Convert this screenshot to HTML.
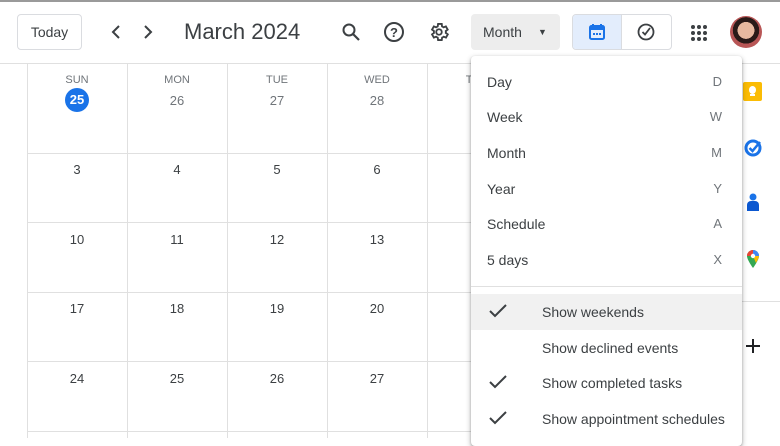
<!DOCTYPE html>
<html><head><style>
*{margin:0;padding:0;box-sizing:border-box}
body{width:780px;height:438px;overflow:hidden;background:#fff;font-family:"Liberation Sans",Arial,sans-serif;color:#3c4043;position:relative}
.topline{position:absolute;left:0;top:0;width:780px;height:2px;background:#9a9a9a}
.hdr{position:absolute;left:0;top:2px;width:780px;height:62px;border-bottom:1px solid #e0e0e0}
.btn{position:absolute;border:1px solid #dadce0;border-radius:4px}
.col{position:absolute;top:64px;width:1px;height:374px;background:#e0e0e0}
.row{position:absolute;left:27px;width:710px;height:1px;background:#e0e0e0}
.dn{position:absolute;width:100px;text-align:center;font-size:13px;color:#3c4043}
.dh{position:absolute;width:100px;text-align:center;font-size:11px;color:#70757a;top:74px}
.menu{position:absolute;left:471px;top:56px;width:271px;height:390px;background:#fff;border-radius:4px;box-shadow:0 2px 6px rgba(0,0,0,.3),0 1px 2px rgba(0,0,0,.2)}
.mi{position:absolute;left:16px;right:20px;font-size:14px;color:#3c4043}
.mi span{position:absolute;right:0;top:0;color:#70757a;font-size:13px}
.ck{position:absolute;left:71px;font-size:14px;color:#3c4043}
</style></head><body>
<div class="topline"></div>
<div class="hdr"></div>
<div class="btn" style="left:17px;top:14px;width:65px;height:36px;font-size:14px;line-height:34px;text-align:center;color:#3c4043">Today</div>
<svg style="position:absolute;left:108px;top:24px" width="16" height="16"><path d="M11 2 L5 8 L11 14" fill="none" stroke="#3c4043" stroke-width="2"/></svg>
<svg style="position:absolute;left:140px;top:24px" width="16" height="16"><path d="M5 2 L11 8 L5 14" fill="none" stroke="#3c4043" stroke-width="2"/></svg>
<div style="position:absolute;left:184px;top:19px;font-size:22px;color:#3c4043">March 2024</div>
<svg style="position:absolute;left:341px;top:22px" width="20" height="20"><circle cx="8" cy="8" r="5.5" fill="none" stroke="#3c4043" stroke-width="2"/><path d="M12 12 L18 18" stroke="#3c4043" stroke-width="2.2"/></svg>
<svg style="position:absolute;left:383px;top:21px" width="22" height="22"><circle cx="11" cy="11" r="9" fill="none" stroke="#3c4043" stroke-width="2"/><text x="11" y="16" font-size="13" text-anchor="middle" fill="#3c4043" font-family="Liberation Sans" font-weight="bold">?</text></svg>
<svg style="position:absolute;left:428px;top:21px" width="22" height="22" viewBox="0 0 24 24"><path d="M19.4 13a7.5 7.5 0 000-2l2.1-1.6-2-3.5-2.5 1a7.3 7.3 0 00-1.7-1L15 3.2h-4l-.4 2.7a7.3 7.3 0 00-1.7 1l-2.5-1-2 3.5L6.5 11a7.5 7.5 0 000 2l-2.1 1.6 2 3.5 2.5-1a7.3 7.3 0 001.7 1l.4 2.7h4l.4-2.7a7.3 7.3 0 001.7-1l2.5 1 2-3.5z" fill="none" stroke="#3c4043" stroke-width="2"/><circle cx="12" cy="12" r="3" fill="none" stroke="#3c4043" stroke-width="2"/></svg>
<div style="position:absolute;left:471px;top:14px;width:89px;height:36px;background:#ededed;border-radius:4px;font-size:14px;line-height:36px;padding-left:12px">Month<span style="position:absolute;left:67px;top:0;font-size:9px">▼</span></div>
<div class="btn" style="left:572px;top:14px;width:100px;height:36px"></div>
<div style="position:absolute;left:573px;top:15px;width:49px;height:34px;background:#e3edfc;border-right:1px solid #dadce0;border-radius:3px 0 0 3px"></div>
<svg style="position:absolute;left:588px;top:23px" width="18" height="18"><rect x="2" y="3" width="14" height="13" rx="1.5" fill="none" stroke="#1a73e8" stroke-width="2"/><rect x="2" y="3" width="14" height="4" fill="#1a73e8"/><path d="M5 1v3M13 1v3" stroke="#1a73e8" stroke-width="2"/><rect x="5" y="10" width="2" height="2" fill="#1a73e8"/><rect x="8" y="10" width="2" height="2" fill="#1a73e8"/><rect x="11" y="10" width="2" height="2" fill="#1a73e8"/></svg>
<svg style="position:absolute;left:637px;top:23px" width="18" height="18"><circle cx="9" cy="9" r="7.5" fill="none" stroke="#3c4043" stroke-width="1.8"/><path d="M5.5 9 L8 11.5 L13 5" fill="none" stroke="#3c4043" stroke-width="1.8"/></svg>
<svg style="position:absolute;left:690px;top:24px" width="18" height="18" fill="#3c4043"><circle cx="3" cy="3" r="2"/><circle cx="9" cy="3" r="2"/><circle cx="15" cy="3" r="2"/><circle cx="3" cy="9" r="2"/><circle cx="9" cy="9" r="2"/><circle cx="15" cy="9" r="2"/><circle cx="3" cy="15" r="2"/><circle cx="9" cy="15" r="2"/><circle cx="15" cy="15" r="2"/></svg>
<div style="position:absolute;left:730px;top:16px;width:32px;height:32px;border-radius:50%;background:radial-gradient(circle at 50% 45%,#e8b9a0 0 35%,#2a1a18 36% 55%,#b85656 56%)"></div>

<div class="col" style="left:27px"></div><div class="col" style="left:127px"></div><div class="col" style="left:227px"></div><div class="col" style="left:327px"></div><div class="col" style="left:427px"></div>
<div class="row" style="top:153px"></div><div class="row" style="top:222px"></div><div class="row" style="top:292px"></div><div class="row" style="top:361px"></div><div class="row" style="top:431px"></div>

<div class="dh" style="left:27px">SUN</div><div class="dh" style="left:127px">MON</div><div class="dh" style="left:227px">TUE</div><div class="dh" style="left:327px">WED</div><div class="dh" style="left:427px">THU</div>
<div style="position:absolute;left:65px;top:88px;width:24px;height:24px;border-radius:50%;background:#1a73e8;color:#fff;font-size:13px;font-weight:bold;text-align:center;line-height:24px">25</div>
<div class="dn" style="left:127px;top:93px;color:#70757a">26</div><div class="dn" style="left:227px;top:93px;color:#70757a">27</div><div class="dn" style="left:327px;top:93px;color:#70757a">28</div>
<div class="dn" style="left:27px;top:162px">3</div><div class="dn" style="left:127px;top:162px">4</div><div class="dn" style="left:227px;top:162px">5</div><div class="dn" style="left:327px;top:162px">6</div>
<div class="dn" style="left:27px;top:232px">10</div><div class="dn" style="left:127px;top:232px">11</div><div class="dn" style="left:227px;top:232px">12</div><div class="dn" style="left:327px;top:232px">13</div>
<div class="dn" style="left:27px;top:301px">17</div><div class="dn" style="left:127px;top:301px">18</div><div class="dn" style="left:227px;top:301px">19</div><div class="dn" style="left:327px;top:301px">20</div>
<div class="dn" style="left:27px;top:371px">24</div><div class="dn" style="left:127px;top:371px">25</div><div class="dn" style="left:227px;top:371px">26</div><div class="dn" style="left:327px;top:371px">27</div>

<div style="position:absolute;left:743px;top:82px;width:19px;height:19px;background:#fbbc04;border-radius:2px"><div style="position:absolute;left:6px;top:4px;width:7px;height:8px;border-radius:50%;background:#fff"></div><div style="position:absolute;left:7px;top:12px;width:5px;height:2px;background:#fff"></div></div>
<svg style="position:absolute;left:744px;top:138px" width="20" height="20"><circle cx="9" cy="10" r="7" fill="none" stroke="#1a73e8" stroke-width="3"/><path d="M5.5 10 L8.5 13 L16 4" fill="none" stroke="#1a73e8" stroke-width="2.5"/></svg>
<svg style="position:absolute;left:745px;top:193px" width="16" height="20"><circle cx="8" cy="4" r="3.5" fill="#1a73e8"/><path d="M2 18 V12 a4 4 0 014-4 h4 a4 4 0 014 4 V18z" fill="#0b57d0"/></svg>
<svg style="position:absolute;left:745px;top:249px" width="16" height="20" viewBox="0 0 16 20"><path d="M8 1a6 6 0 00-6 6c0 4 6 12 6 12s6-8 6-12a6 6 0 00-6-6z" fill="#34a853"/><path d="M8 1a6 6 0 016 6l-6 0z" fill="#4285f4"/><path d="M2 7a6 6 0 016-6v6z" fill="#ea4335"/><path d="M14 7c0 2-2 5-3 7l-3-7z" fill="#fbbc04"/><circle cx="8" cy="7" r="2.2" fill="#fff"/></svg>
<svg style="position:absolute;left:745px;top:338px" width="16" height="16"><path d="M8 1v14M1 8h14" stroke="#202124" stroke-width="2"/></svg>
<div style="position:absolute;left:742px;top:301px;width:38px;height:1px;background:#e0e0e0"></div>

<div class="menu">
<div class="mi" style="top:18px">Day<span>D</span></div>
<div class="mi" style="top:53px">Week<span>W</span></div>
<div class="mi" style="top:89px">Month<span>M</span></div>
<div class="mi" style="top:125px">Year<span>Y</span></div>
<div class="mi" style="top:160px">Schedule<span>A</span></div>
<div class="mi" style="top:196px">5 days<span>X</span></div>
<div style="position:absolute;left:0;top:230px;width:271px;height:1px;background:#e0e0e0"></div>
<div style="position:absolute;left:0;top:238px;width:271px;height:36px;background:#f1f1f1"></div>
<svg style="position:absolute;left:17px;top:247px" width="20" height="16"><path d="M2 8 L7 13 L18 2" fill="none" stroke="#3c4043" stroke-width="2"/></svg>
<div class="ck" style="top:248px">Show weekends</div>
<div class="ck" style="top:284px">Show declined events</div>
<svg style="position:absolute;left:17px;top:318px" width="20" height="16"><path d="M2 8 L7 13 L18 2" fill="none" stroke="#3c4043" stroke-width="2"/></svg>
<div class="ck" style="top:319px">Show completed tasks</div>
<svg style="position:absolute;left:17px;top:354px" width="20" height="16"><path d="M2 8 L7 13 L18 2" fill="none" stroke="#3c4043" stroke-width="2"/></svg>
<div class="ck" style="top:355px">Show appointment schedules</div>
</div>
</body></html>
